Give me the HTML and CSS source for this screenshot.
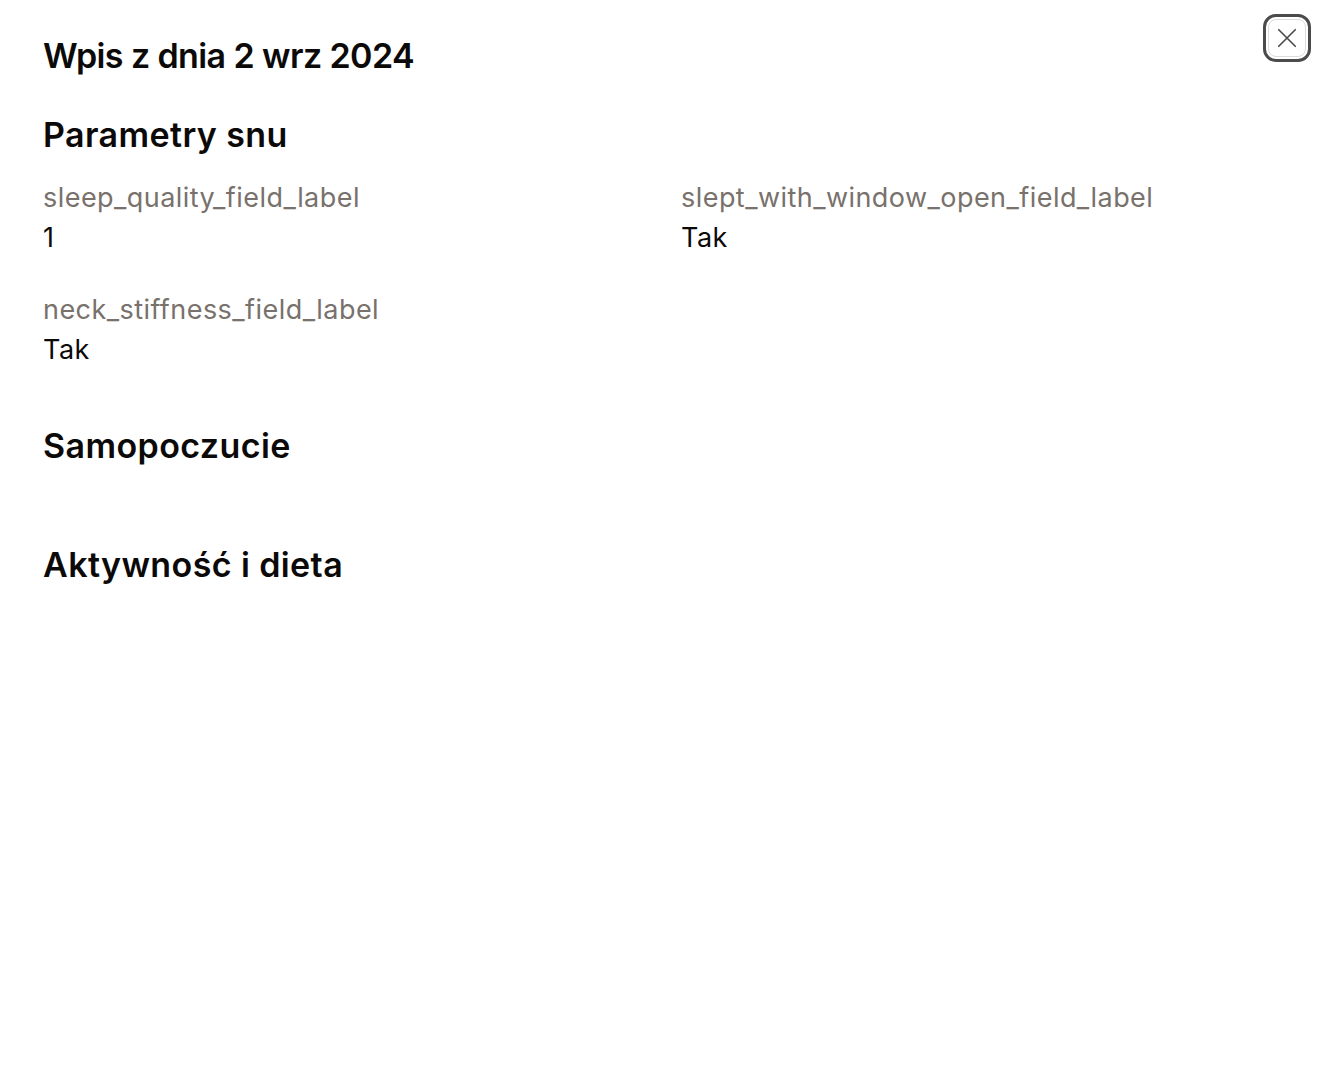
FILE: index.html
```html
<!DOCTYPE html>
<html lang="pl">
<head>
<meta charset="utf-8">
<title>Wpis z dnia 2 wrz 2024</title>
<link rel="stylesheet" href="styles.css">
</head>
<body>
<div class="page">
  <button class="close" aria-label="Zamknij">
    <span class="close-inner">
      <svg viewBox="0 0 24 24" width="22" height="22"><path d="M3 3 L21 21 M21 3 L3 21" stroke="#4a4a4a" stroke-width="1.8" stroke-linecap="round" fill="none"/></svg>
    </span>
  </button>
  <h1 class="title">Wpis z dnia 2 wrz 2024</h1>
  <section class="section">
    <h2 class="section-title">Parametry snu</h2>
    <div class="fields">
      <div class="field">
        <div class="field-label">sleep_quality_field_label</div>
        <div class="field-value">1</div>
      </div>
      <div class="field">
        <div class="field-label">slept_with_window_open_field_label</div>
        <div class="field-value">Tak</div>
      </div>
      <div class="field">
        <div class="field-label">neck_stiffness_field_label</div>
        <div class="field-value">Tak</div>
      </div>
    </div>
  </section>
  <section class="section">
    <h2 class="section-title">Samopoczucie</h2>
    <div class="fields"></div>
  </section>
  <section class="section">
    <h2 class="section-title">Aktywność i dieta</h2>
    <div class="fields"></div>
  </section>
</div>
</body>
</html>
```
FILE: styles.css
```css
* { box-sizing: border-box; }
html, body { margin: 0; padding: 0; background: #ffffff; }
body { font-family: Inter, "Noto Sans", sans-serif; color: #0c0a09; }
.page {
  position: relative;
  padding: 36px 43px 40px;
  display: flex;
  flex-direction: column;
}
.title {
  margin: 0;
  font-size: 34px;
  line-height: 40px;
  font-weight: 600;
  letter-spacing: -0.6px;
}
.section {
  display: flex;
  flex-direction: column;
  gap: 25px;
  margin-top: 58px;
}
.page > .title + .section { margin-top: 41px; }
.section-title {
  margin: 0;
  font-size: 34px;
  line-height: 36px;
  font-weight: 600;
  letter-spacing: 0.4px;
}
.fields {
  display: grid;
  grid-template-columns: 1fr 1fr;
  column-gap: 34px;
  row-gap: 32px;
}
.field-label {
  font-size: 27px;
  line-height: 40px;
  letter-spacing: 0.45px;
  color: #78716c;
}
.field-value {
  font-size: 27px;
  line-height: 40px;
  letter-spacing: 0.45px;
  color: #0c0a09;
}
.close {
  position: absolute;
  top: 14px;
  right: 17px;
  width: 48px;
  height: 48px;
  padding: 0;
  border: 3px solid #4b4b4b;
  border-radius: 13px;
  background: #fff;
  display: flex;
  align-items: center;
  justify-content: center;
}
.close-inner {
  width: 38px;
  height: 38px;
  border: 1px solid #dcdcdc;
  border-radius: 8px;
  display: flex;
  align-items: center;
  justify-content: center;
}
.close-inner svg { width: 22px; height: 22px; }
```
